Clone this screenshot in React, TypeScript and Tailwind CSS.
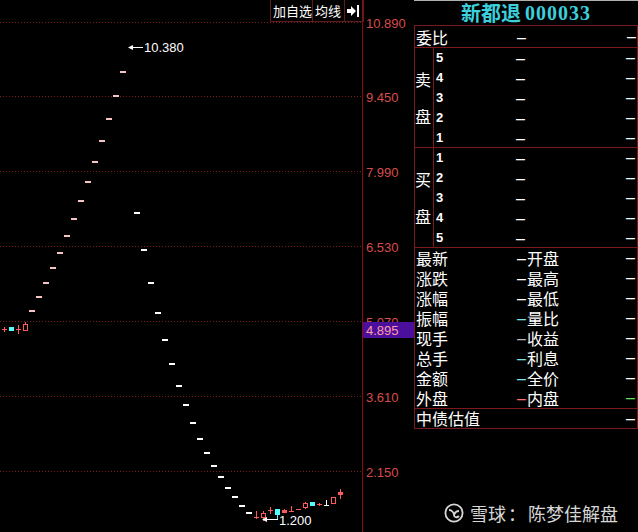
import React from 'react';

// price -> pixel row on the chart
const Y = (p: number) => 22 + (10.89 - p) * 51.37;

const levels = ['10.890', '9.450', '7.990', '6.530', '5.070', '3.610', '2.150'];

const RED = '#ff5a5a';
const CYAN = '#54fcfc';

type Candle = { x: number; top: number; bot: number; hi: number; lo: number; c: string; hollow?: boolean };

const candles: Candle[] = [
  { x: 4, top: 329, bot: 329, hi: 327, lo: 331, c: RED },
  { x: 11, top: 327, bot: 330, hi: 327, lo: 330, c: CYAN },
  { x: 18, top: 329, bot: 329, hi: 325, lo: 333, c: RED },
  { x: 25, top: 324, bot: 330, hi: 322, lo: 330, c: RED, hollow: true },
  { x: 256, top: 517, bot: 517, hi: 511, lo: 518, c: RED },
  { x: 263, top: 513, bot: 517, hi: 511, lo: 520, c: RED, hollow: true },
  { x: 270, top: 510, bot: 510, hi: 507, lo: 513, c: RED },
  { x: 277, top: 509, bot: 514, hi: 509, lo: 518, c: CYAN },
  { x: 284, top: 510, bot: 512, hi: 509, lo: 512, c: RED },
  { x: 291, top: 511, bot: 511, hi: 506, lo: 511, c: RED },
  { x: 298, top: 509, bot: 509, hi: 509, lo: 509, c: RED },
  { x: 305, top: 503, bot: 507, hi: 502, lo: 508, c: RED, hollow: true },
  { x: 312, top: 502, bot: 505, hi: 502, lo: 505, c: CYAN },
  { x: 319, top: 504, bot: 504, hi: 503, lo: 505, c: RED },
  { x: 326, top: 505, bot: 505, hi: 500, lo: 505, c: '#ffffff' },
  { x: 333, top: 497, bot: 503, hi: 497, lo: 503, c: RED, hollow: true },
  { x: 340, top: 492, bot: 494, hi: 489, lo: 498, c: RED },
];

const rising = Array.from({ length: 14 }, (_, i) => ({ x: 32 + 7 * i, y: Y(5.264 * Math.pow(1.05, i)) }));
const falling = Array.from({ length: 17 }, (_, k) => ({ x: 137 + 7 * k, y: Y(7.172 * Math.pow(0.9, k)) }));

const Chart = () => (
  <svg width={414} height={532} className="block">
    {levels.map((l) => {
      const y = Math.round(Y(parseFloat(l))) + 0.5;
      return (
        <g key={l}>
          <line x1={0} x2={362} y1={y} y2={y} stroke="#7a1a1a" strokeDasharray="1 2" />
          <text x={366} y={y + 5} fill="#d84c4c" fontSize={13} fontFamily="Liberation Sans, Arial, sans-serif">
            {l}
          </text>
        </g>
      );
    })}
    <line x1={362.5} x2={362.5} y1={0} y2={532} stroke="#8c0c0c" />

    {rising.map((d) => (
      <rect key={'r' + d.x} x={d.x - 3} y={Math.round(d.y) - 1} width={6} height={2} fill="#f6c4c4" />
    ))}
    {falling.map((d) => (
      <rect key={'f' + d.x} x={d.x - 3} y={Math.round(d.y) - 1} width={6} height={2} fill="#ffffff" />
    ))}

    {candles.map((k) => (
      <g key={'c' + k.x}>
        {k.hi !== k.lo && <line x1={k.x + 0.5} x2={k.x + 0.5} y1={k.hi} y2={k.lo + 1} stroke={k.c} />}
        {k.top === k.bot ? (
          <rect x={k.x - 2} y={k.top} width={5} height={1} fill={k.c} />
        ) : k.hollow ? (
          <rect x={k.x - 1.5} y={k.top + 0.5} width={4} height={k.bot - k.top} fill="#000" stroke={k.c} />
        ) : (
          <rect x={k.x - 2} y={k.top} width={5} height={k.bot - k.top + 1} fill={k.c} />
        )}
      </g>
    ))}

    {/* high / low markers */}
    <line x1={129} x2={143} y1={47.5} y2={47.5} stroke="#fff" />
    <path d="M128 47.5 L133 45 L133 50 Z" fill="#fff" />
    <text x={144} y={52} fill="#fff" fontSize={13} fontFamily="Liberation Sans, Arial, sans-serif">10.380</text>
    <line x1={263} x2={278} y1={519.5} y2={519.5} stroke="#fff" />
    <path d="M262 519.5 L267 517 L267 522 Z" fill="#fff" />
    <text x={279} y={525} fill="#fff" fontSize={13} fontFamily="Liberation Sans, Arial, sans-serif">1.200</text>

    {/* current price tag */}
    <rect x={363} y={322} width={51} height={16} fill="#4b0f9e" />
    <text x={366} y={335} fill="#ff9aa8" fontSize={13} fontFamily="Liberation Sans, Arial, sans-serif">4.895</text>
  </svg>
);

const Dash = ({ c = '#ffffff' }: { c?: string }) => (
  <span className="font-['Liberation_Sans',sans-serif] text-[16px] leading-[20px]" style={{ color: c }}>
    –
  </span>
);

const cjk = "font-['Noto_Sans_CJK_SC',sans-serif]";

const bottomRows: [string, string, string, string][] = [
  ['最新', '#ffffff', '开盘', '#ffffff'],
  ['涨跌', '#ffffff', '最高', '#ffffff'],
  ['涨幅', '#ffffff', '最低', '#ffffff'],
  ['振幅', '#7fe0e0', '量比', '#ffffff'],
  ['现手', '#b8b8b8', '收益', '#ffffff'],
  ['总手', '#7fe0e0', '利息', '#ffffff'],
  ['金额', '#7fe0e0', '全价', '#ffffff'],
  ['外盘', '#ff7070', '内盘', '#60e060'],
];

const Book = ({ side, nums }: { side: string; nums: number[] }) => (
  <div className="flex h-[100px] border-b border-[#7a1a1a]">
    <div className={`w-[19px] flex flex-col justify-around py-[12px] border-r border-[#7a1a1a] text-white text-[16px] leading-[18px] ${cjk}`}>
      <span>{side}</span>
      <span>盘</span>
    </div>
    <div className="flex-1 flex flex-col">
      {nums.map((n) => (
        <div key={n} className="h-[20px] flex items-center pl-[2px]">
          <span className="w-[80px] text-white font-bold text-[13px] font-['Liberation_Sans',sans-serif]">{n}</span>
          <span className="w-[110px]"><Dash /></span>
          <Dash c="#e6ffff" />
        </div>
      ))}
    </div>
  </div>
);

export default function App() {
  return (
    <div className="relative w-[638px] h-[532px] bg-black overflow-hidden flex">
      <div className="relative w-[414px] h-full shrink-0">
        <Chart />
        {/* toolbar over the chart */}
        <div className={`absolute left-[270px] top-0 h-[22px] flex border border-t-0 border-[#5c1c1c] text-white text-[13px] ${cjk}`}>
          <div className="w-[41px] flex items-center pl-[2px]">加自选</div>
          <div className="w-[32px] flex items-center pl-[2px] border-l border-[#5c1c1c]">均线</div>
          <div className="w-[19px] flex items-center justify-center border-l border-[#5c1c1c]">
            <svg width="14" height="12" viewBox="0 0 14 12">
              <path d="M0 4 H4 V1 L9 6 L4 11 V8 H0 Z" fill="#fff" />
              <rect x="10" y="0" width="2" height="12" fill="#fff" />
            </svg>
          </div>
        </div>
      </div>

      <div className="flex-1 flex flex-col border-t border-[#b0b0b0]">
        <div className="h-[24px] flex items-center justify-center gap-[4px] text-[#3ccfdc] font-bold leading-none">
          <span className={`text-[20px] ${cjk}`}>新都退</span>
          <span className="text-[20px] tracking-[1px] font-['Liberation_Serif',serif]">000033</span>
        </div>
        <div className="border border-[#7a1a1a] flex flex-col">
          <div className="h-[22px] flex items-center pl-[1px] border-b border-[#7a1a1a]">
            <span className={`w-[101px] text-white text-[16px] leading-[20px] ${cjk}`}>委比</span>
            <span className="w-[110px]"><Dash /></span>
            <Dash />
          </div>
          <Book side="卖" nums={[5, 4, 3, 2, 1]} />
          <Book side="买" nums={[1, 2, 3, 4, 5]} />
          <div className="flex flex-col border-b border-[#7a1a1a]">
            {bottomRows.map(([a, ca, b, cb]) => (
              <div key={a} className={`h-[20px] flex items-center pl-[1px] text-white text-[16px] leading-[20px] ${cjk}`}>
                <span className="w-[101px]">{a}</span>
                <span className="w-[10px]"><Dash c={ca} /></span>
                <span className="w-[99px]">{b}</span>
                <Dash c={cb} />
              </div>
            ))}
          </div>
          <div className={`h-[19px] flex items-center pl-[1px] text-white text-[16px] leading-[19px] ${cjk}`}>
            <span className="w-[210px]">中债估值</span>
            <Dash />
          </div>
        </div>
      </div>

      {/* watermark */}
      <div className={`absolute right-[20px] bottom-[8px] flex items-center text-[#d6d6d6] text-[18px] leading-[22px] ${cjk}`}>
        <svg width="20" height="20" viewBox="0 0 20 20" className="mr-[6px]">
          <circle cx="10" cy="10" r="8.6" fill="none" stroke="#d6d6d6" strokeWidth="1.8" />
          <path d="M5 7 C8 7 10 10 10 12 C10 14.5 13 15 15 13" fill="none" stroke="#d6d6d6" strokeWidth="1.8" />
          <path d="M10 12 C11 9 13 8 15 8" fill="none" stroke="#d6d6d6" strokeWidth="1.8" />
        </svg>
        <span>雪球</span>
        <span className="mx-[2px]">：</span>
        <span>陈梦佳解盘</span>
      </div>
    </div>
  );
}
